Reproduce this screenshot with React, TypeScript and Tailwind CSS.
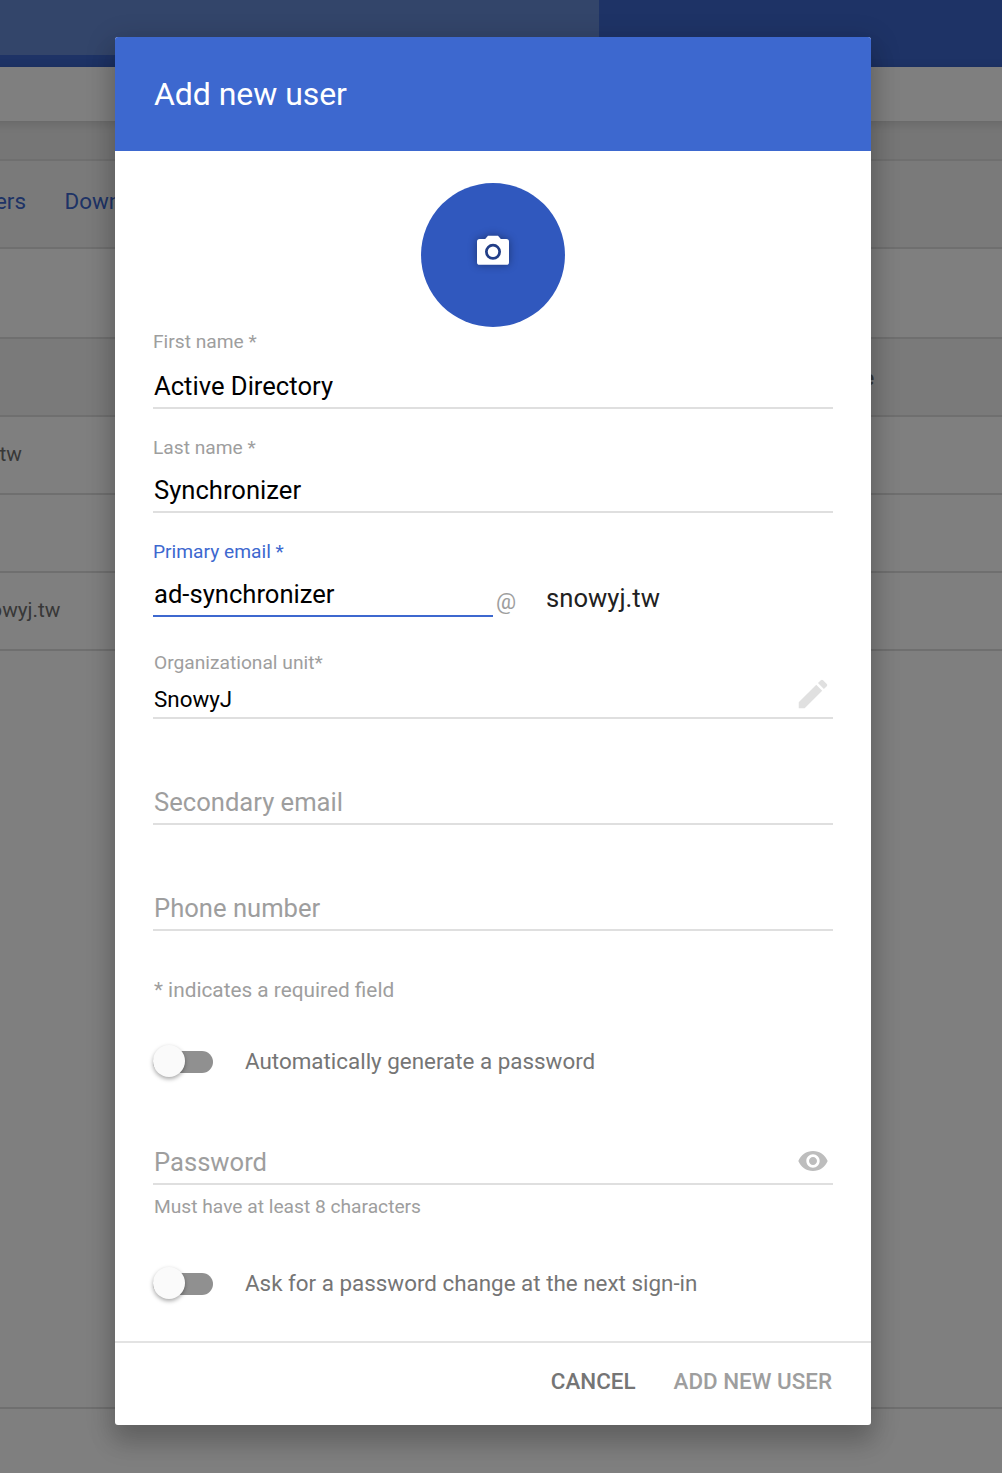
import React from "react";

const line = "border-b-2 border-[#dfdfdf]";

function Backdrop() {
  return (
    <div className="flex h-full flex-col overflow-hidden bg-white text-[22.4px] text-[#707070]">
      <div className="h-[67px] shrink-0 bg-[#3c66cc]">
        <div className="h-[55px] w-[599px] bg-[#668ad4]" />
      </div>
      <div className="relative z-10 -mx-4 h-[54px] shrink-0 bg-white shadow-[0_2px_10px_rgba(0,0,0,0.14)]" />
      <div className={`h-[40px] shrink-0 bg-[#ececec] ${line}`} />
      <div className={`flex h-[88px] shrink-0 items-start bg-[#f5f5f5] leading-[80px] text-[#3c66cc] ${line}`}>
        <div className="flex w-[26px] shrink-0 justify-end">Users</div>
        <div className="ml-[38.5px]">Download</div>
      </div>
      <div className={`h-[90px] shrink-0 ${line}`} />
      <div className={`flex h-[78px] shrink-0 items-center justify-end bg-[#f5f5f5] pt-[2px] pr-[128px] text-[20px] font-bold ${line}`}>
        Email usage
      </div>
      <div className={`flex h-[78px] shrink-0 items-center text-[20.8px] ${line}`}>
        <div className="flex w-[22px] shrink-0 justify-end">snowyj.tw</div>
      </div>
      <div className={`h-[78px] shrink-0 ${line}`} />
      <div className={`flex h-[78px] shrink-0 items-center text-[20.8px] ${line}`}>
        <div className="flex w-[60.5px] shrink-0 justify-end">admin@snowyj.tw</div>
      </div>
      <div className={`h-[758px] shrink-0 ${line}`} />
    </div>
  );
}

function Toggle({ label }: { label: string }) {
  return (
    <div className="flex h-[32px] items-center">
      <div className="relative mt-[2px] h-[22px] w-[60px] rounded-[11px] bg-[#909090]">
        <div className="absolute -top-[6px] left-0 size-[32px] rounded-full bg-[#fafafa] shadow-[0_2px_4px_rgba(0,0,0,0.35)]" />
      </div>
      <div className="ml-[32px] h-[32px] text-[22.4px] leading-[32px] whitespace-nowrap text-[#757575]">{label}</div>
    </div>
  );
}

const label = "h-[28px] text-[19.2px] leading-[28px] whitespace-nowrap";
const input = "h-[42px] pl-px text-[25.6px] leading-[42px] whitespace-nowrap";

export default function App() {
  return (
    <div className="relative h-[1473px] w-[1002px] overflow-hidden font-['Roboto',sans-serif]">
      <Backdrop />
      <div className="absolute inset-0 z-20 bg-black/50 pt-[37px] pl-[115px]">
        <div className="flex h-[1388px] w-[756px] flex-col rounded-[3px] bg-white shadow-[0_18px_24px_2px_rgba(0,0,0,0.14),0_6px_28px_4px_rgba(0,0,0,0.14)]">
          <div className="h-[114px] shrink-0 rounded-t-[3px] bg-[#3d68cf] pl-[39px] text-[32px] leading-[114px] tracking-[-0.05px] text-white">
            Add new user
          </div>
          <div className="h-[1190px] px-[38px] pt-[32px]">
            <div className="mx-auto flex size-[144px] justify-center rounded-full bg-[#3058be] pt-[48px]">
              <svg viewBox="0 0 24 24" className="size-[40px] overflow-visible drop-shadow-[0_0_4px_rgba(0,0,0,0.4)]" fill="white">
                <circle cx="12" cy="12.5" r="3.15" />
                <path
                  fillRule="evenodd"
                  d="M9 2.900 7.300 4.800H4A1.600 1.600 0 0 0 2.400 6.400V18.700A1.600 1.600 0 0 0 4 20.300h16a1.600 1.600 0 0 0 1.600-1.600V6.400A1.600 1.600 0 0 0 20 4.800h-3.300L15 2.900H9Zm3 14.400a4.800 4.800 0 1 1 0-9.600 4.800 4.800 0 0 1 0 9.600Z"
                />
              </svg>
            </div>
            <div className={`${label} mt-px text-[#9e9e9e]`}>First name *</div>
            <div className={`${input} ${line} box-content mt-[9px] text-black`}>Active Directory</div>
            <div className={`${label} mt-[25px] text-[#9e9e9e]`}>Last name *</div>
            <div className={`${input} ${line} box-content mt-[7px] text-black`}>Synchronizer</div>
            <div className="mt-[25px] flex h-[79px]">
              <div className="w-[340px]">
                <div className={`${label} text-[#3d68cf]`}>Primary email *</div>
                <div className="mt-[7px] box-content h-[42px] border-b-2 border-[#3d68cf] pl-px text-[25.6px] leading-[42px] text-black">
                  ad-synchronizer
                </div>
              </div>
              <div className="ml-[3px] pt-[42px] text-[22.4px] leading-[42px] text-[#9e9e9e]">@</div>
              <div className="ml-[30px] pt-[39px] text-[25.6px] leading-[42px] text-[#212121]">snowyj.tw</div>
            </div>
            <div className={`mt-[31px] flex h-[71px] items-start justify-between ${line}`}>
              <div className="pl-px">
                <div className={`${label} mt-px text-[#9e9e9e]`}>Organizational unit*</div>
                <div className="mt-[7px] h-[30px] text-[22.4px] leading-[30px] text-black">SnowyJ</div>
              </div>
              <svg viewBox="0 0 24 24" className="mt-[27px] mr-px size-[38px]" fill="#e0e0e0">
                <path d="M3 17.250V21h3.750L17.810 9.940l-3.750-3.750L3 17.250zM20.710 7.040a1 1 0 0 0 0-1.410l-2.340-2.340a1 1 0 0 0-1.410 0l-1.830 1.830 3.750 3.750 1.830-1.830z" />
              </svg>
            </div>
            <div className={`${input} ${line} box-content mt-[62px] text-[#9e9e9e]`}>Secondary email</div>
            <div className={`${input} ${line} box-content mt-[62px] text-[#9e9e9e]`}>Phone number</div>
            <div className="mt-[43px] h-[32px] pl-px text-[20.8px] leading-[32px] text-[#9e9e9e]">
              * indicates a required field
            </div>
            <div className="mt-[39px]">
              <Toggle label="Automatically generate a password" />
            </div>
            <div className={`mt-[64px] flex h-[44px] justify-between pr-1 pl-px text-[25.6px] leading-[42px] text-[#9e9e9e] ${line}`}>
              <span>Password</span>
              <svg viewBox="0 0 24 24" className="mt-1 size-[32px]" fill="#bdbdbd">
                <path d="M12 4.500C7 4.500 2.730 7.610 1 12c1.730 4.390 6 7.500 11 7.500s9.270-3.110 11-7.500c-1.730-4.390-6-7.500-11-7.500zM12 17c-2.760 0-5-2.240-5-5s2.240-5 5-5 5 2.240 5 5-2.240 5-5 5zm0-8c-1.660 0-3 1.340-3 3s1.340 3 3 3 3-1.340 3-3-1.340-3-3-3z" />
              </svg>
            </div>
            <div className={`${label} mt-[8px] pl-px text-[#9e9e9e]`}>Must have at least 8 characters</div>
            <div className="mt-[46px]">
              <Toggle label="Ask for a password change at the next sign-in" />
            </div>
          </div>
          <div className="flex h-[84px] items-start justify-end gap-[38px] border-t-2 border-[#e3e3e3] pr-[39px] text-[22.4px] leading-[77px] font-medium whitespace-nowrap">
            <button className="text-[#757575]">CANCEL</button>
            <button className="text-[#9e9e9e]">ADD NEW USER</button>
          </div>
        </div>
      </div>
    </div>
  );
}
